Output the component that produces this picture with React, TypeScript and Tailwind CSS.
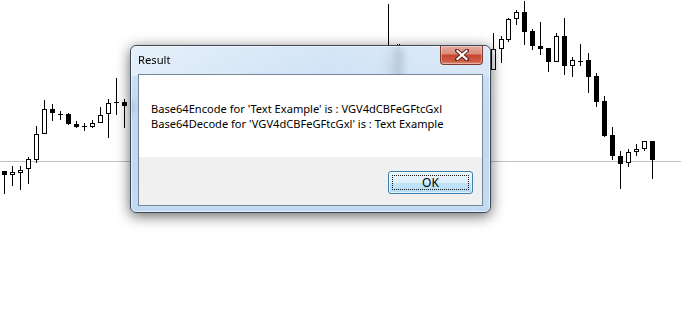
import React from "react";

// [x, bodyTop, bodyBottom, wickTop, wickBottom, kind] kind: 0 white, 1 black, 2 cross
type Candle = [number, number, number, number, number, 0 | 1 | 2];

const candles: Candle[] = [
    [4, 171, 175, 171, 194, 1],
    [12, 172, 175, 166, 186, 0],
    [20, 170, 173, 166, 190, 0],
    [28, 159, 169, 157, 184, 0],
    [36, 134, 160, 126, 163, 0],
    [44, 109, 134, 100, 134, 0],
    [52, 109, 113, 104, 121, 1],
    [60, 114, 114, 111, 120, 2],
    [68, 114, 124, 113, 125, 1],
    [76, 124, 127, 121, 128, 1],
    [84, 126, 126, 123, 131, 2],
    [92, 123, 127, 120, 128, 0],
    [100, 115, 123, 107, 123, 0],
    [108, 103, 114, 99, 138, 0],
    [116, 102, 102, 78, 115, 2],
    [124, 102, 106, 99, 128, 1],
    // behind the dialog, only seen through the glass
    [132, 103, 111, 98, 120, 1],
    [388, 60, 80, 4, 100, 0],
    [397, 50, 95, 44, 100, 1],
    [399, 50, 95, 44, 100, 1],
    [493, 49, 70, 33, 70, 0],
    [501, 39, 49, 36, 63, 0],
    [508, 19, 40, 18, 42, 0],
    [516, 12, 19, 10, 25, 0],
    [524, 12, 32, 1, 45, 1],
    [532, 31, 46, 29, 50, 1],
    [540, 46, 49, 22, 55, 1],
    [548, 48, 62, 48, 72, 1],
    [556, 36, 62, 33, 62, 0],
    [564, 36, 66, 18, 75, 1],
    [572, 60, 66, 57, 77, 0],
    [580, 61, 61, 44, 66, 2],
    [588, 60, 77, 53, 93, 1],
    [596, 76, 102, 73, 107, 1],
    [604, 101, 136, 96, 137, 1],
    [612, 135, 156, 127, 160, 1],
    [620, 156, 164, 151, 189, 1],
    [628, 152, 163, 149, 167, 0],
    [636, 149, 152, 144, 156, 0],
    [644, 141, 149, 141, 151, 0],
    [652, 141, 160, 141, 179, 1],
];

function Chart() {
    return (
        <svg width="681" height="311" className="block" shapeRendering="crispEdges">
            <rect width="681" height="311" fill="#ffffff" />
            <line x1="0" y1="161.5" x2="681" y2="161.5" stroke="#c0c0c0" strokeWidth="1" />
            {candles.map(([x, bt, bb, wt, wb, kind], i) => (
                <g key={i}>
                    <line x1={x + 0.5} y1={wt} x2={x + 0.5} y2={wb} stroke="#000" strokeWidth="1" />
                    {kind === 1 && <rect x={x - 2} y={bt} width="5" height={Math.max(bb - bt, 2)} fill="#000" />}
                    {kind === 0 && (
                        <rect x={x - 1.5} y={bt + 0.5} width="4" height={bb - bt - 1} fill="#fff" stroke="#000" strokeWidth="1" />
                    )}
                    {kind === 2 && <line x1={x - 2} y1={bt + 0.5} x2={x + 3} y2={bt + 0.5} stroke="#000" strokeWidth="1" />}
                </g>
            ))}
        </svg>
    );
}

function CloseButton() {
    return (
        <div className="absolute right-[7px] top-0 flex h-[19px] w-[43px] items-center justify-center rounded-b-[4px] border border-t-0 border-[#7d3a30] bg-[linear-gradient(to_bottom,#e6aa9d_0%,#d98a7b_45%,#c7452f_50%,#cf5c45_85%,#e0907a_100%)] shadow-[inset_0_0_0_1px_rgba(255,255,255,0.35)]">
            <svg width="14" height="12" viewBox="0 0 14 12">
                <path d="M2 1.5 L12 10.5 M12 1.5 L2 10.5" stroke="#5b2018" strokeWidth="4" strokeLinecap="square" />
                <path d="M2.5 2 L11.5 10 M11.5 2 L2.5 10" stroke="#ffffff" strokeWidth="2.2" strokeLinecap="square" />
            </svg>
        </div>
    );
}

export default function App() {
    return (
        <div className="relative h-[311px] w-[681px] overflow-hidden bg-white" style={{ fontFamily: '"Segoe UI", "Noto Sans", sans-serif' }}>
            <Chart />

            <div className="absolute left-[130px] top-[45px] flex h-[168px] w-[361px] flex-col rounded-[6px] border border-[#3d4856] bg-[linear-gradient(to_bottom,rgba(196,220,243,0.78),rgba(186,213,239,0.88)_40%,rgba(190,216,241,0.92))] shadow-[0_3px_14px_rgba(0,0,0,0.6),inset_0_0_0_1px_rgba(255,255,255,0.55)] backdrop-blur-[4px]">
                <div className="pointer-events-none absolute inset-x-0 top-0 h-[30px] rounded-t-[6px] bg-[linear-gradient(to_right,rgba(255,255,255,0.45),rgba(255,255,255,0.1)_55%,rgba(255,255,255,0.25))]" />
                <div className="relative flex h-[28px] items-center pl-[7px] pt-[1px] text-[11.2px] text-black">Result</div>
                <CloseButton />

                <div className="relative mx-[7px] mb-[6px] flex flex-1 flex-col border border-[#72869c] bg-white">
                    <div className="h-[82px] pl-[12px] pt-[26px] text-[11.1px] leading-[15px] text-black">
                        <p>Base64Encode for 'Text Example' is : VGV4dCBFeGFtcGxl</p>
                        <p>Base64Decode for 'VGV4dCBFeGFtcGxl' is : Text Example</p>
                    </div>
                    <div className="flex flex-1 justify-end bg-[#f0f0f0] pr-[9px] pt-[14px]">
                        <button className="relative h-[23px] w-[85px] rounded-[3px] border border-[#3c7fb1] bg-[linear-gradient(to_bottom,#ecf6fd_0%,#dceffb_50%,#c2e4f8_51%,#b5dcf4_100%)] text-[12px] text-black shadow-[inset_0_0_0_1px_rgba(255,255,255,0.6)]">
                            <span className="pointer-events-none absolute inset-[3px] border border-dotted border-[#1a1a1a]" />
                            OK
                        </button>
                    </div>
                </div>
            </div>
        </div>
    );
}
